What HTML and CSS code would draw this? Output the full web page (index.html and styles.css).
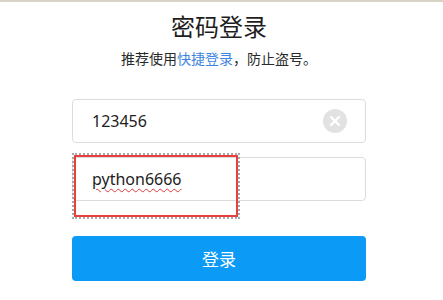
FILE: index.html
```html
<!DOCTYPE html>
<html lang="zh">
<head>
<meta charset="utf-8">
<link rel="stylesheet" href="styles.css">
</head>
<body>
<div class="topbar"></div>
<div class="panel">
  <h1 class="title">密码登录</h1>
  <p class="sub">推荐使用<a class="link">快捷登录</a>，防止盗号。</p>
  <div class="field">
    <span class="value">123456</span>
    <span class="clear">
      <svg width="24" height="24" viewBox="0 0 24 24"><circle cx="12" cy="12" r="12" fill="#e2e2e2"/><path d="M8 8 L16 16 M16 8 L8 16" stroke="#fff" stroke-width="2.4" stroke-linecap="round"/></svg>
    </span>
  </div>
  <div class="field field2">
    <span class="value spell">python6666</span>
    <div class="mark"><div class="mark-inner"></div></div>
  </div>
  <button class="btn">登录</button>
</div>
</body>
</html>
```
FILE: styles.css
```css
html, body {
  margin: 0;
  padding: 0;
  background: #fff;
}
body {
  font-family: "Noto Sans", "Noto Sans CJK SC", sans-serif;
  color: #222;
}
.topbar {
  height: 2px;
  background: #d8d3c6;
}
.panel {
  width: 294px;
  margin-left: 72px;
  display: flex;
  flex-direction: column;
}
.title {
  margin: 9px 0 0;
  font-size: 24px;
  font-weight: 400;
  line-height: 32px;
  text-align: center;
  color: #1e1e1e;
}
.sub {
  margin: 6px 0 0;
  font-size: 14px;
  line-height: 20px;
  text-align: center;
  color: #2a2a2a;
}
.link {
  color: #3d84de;
}
.field {
  position: relative;
  box-sizing: border-box;
  height: 44px;
  margin-top: 30px;
  border: 1px solid #dcdcdc;
  border-radius: 4px;
  display: flex;
  align-items: center;
  justify-content: space-between;
  padding: 0 18px 0 19px;
}
.field2 {
  margin-top: 14px;
}
.value {
  font-size: 16px;
  color: #222;
}
.spell {
  text-decoration: underline wavy #e0393e;
  text-decoration-thickness: 1px;
  text-underline-offset: 3px;
}
.clear {
  display: flex;
}
.mark {
  position: absolute;
  left: -1px;
  top: -5px;
  width: 168px;
  height: 66px;
  box-sizing: border-box;
  border: 2px dotted #a8a8a8;
}
.mark-inner {
  box-sizing: border-box;
  width: 100%;
  height: 100%;
  border: 2px solid #e8403f;
}
.btn {
  margin-top: 35px;
  height: 45px;
  border: none;
  border-radius: 4px;
  background: #0b9bf6;
  color: #fff;
  font-family: "Noto Sans CJK SC", sans-serif;
  font-size: 17px;
}
```
